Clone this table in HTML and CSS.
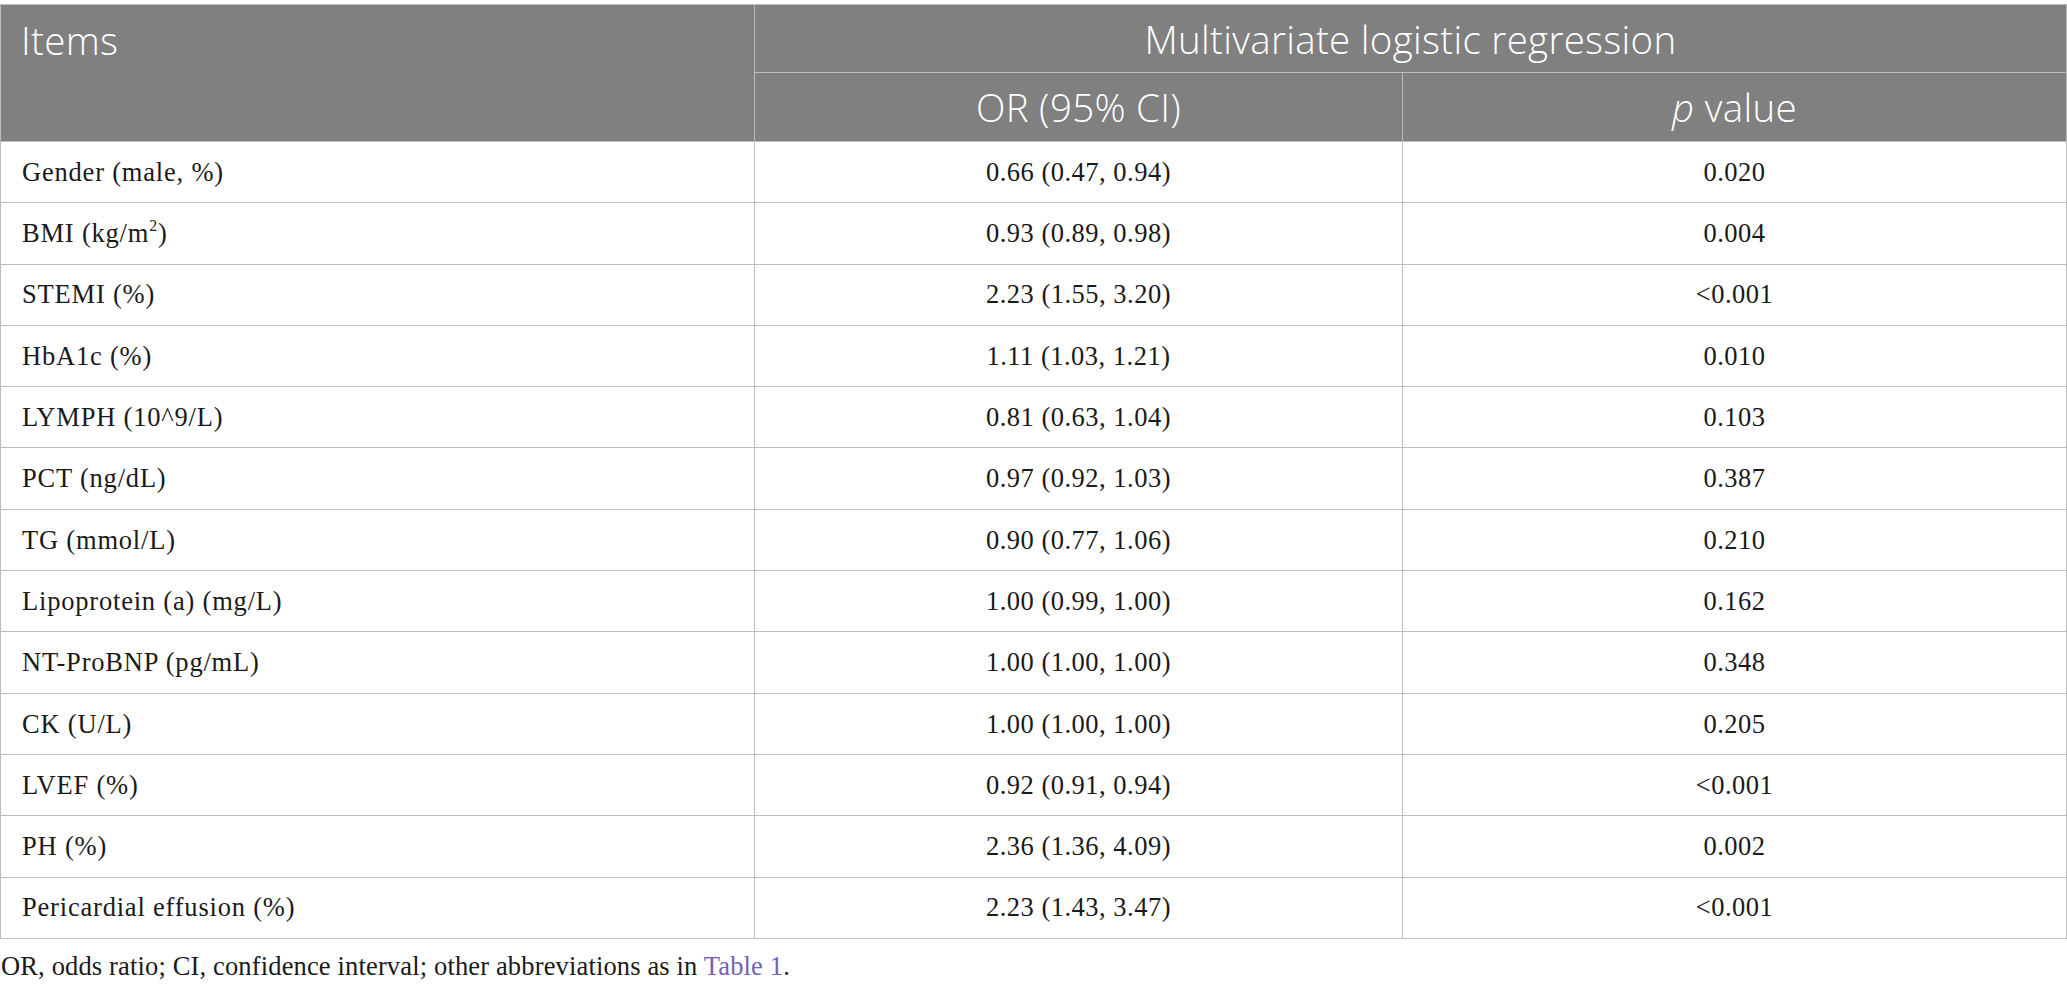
FILE: index.html
```html
<!DOCTYPE html>
<html lang="en">
<head>
<meta charset="utf-8">
<title>Multivariate logistic regression</title>
<link rel="stylesheet" href="styles.css">
</head>
<body>
<div class="page">
  <table class="data">
    <colgroup>
      <col class="c-items">
      <col class="c-or">
      <col class="c-p">
    </colgroup>
    <thead>
      <tr class="h1">
        <th class="items" rowspan="2">Items</th>
        <th class="center" colspan="2">Multivariate logistic regression</th>
      </tr>
      <tr class="h2">
        <th class="center">OR (95% CI)</th>
        <th class="center"><i>p</i> value</th>
      </tr>
    </thead>
    <tbody>
      <tr><td>Gender (male, %)</td><td class="num">0.66 (0.47, 0.94)</td><td class="num">0.020</td></tr>
      <tr><td>BMI (kg/m<sup>2</sup>)</td><td class="num">0.93 (0.89, 0.98)</td><td class="num">0.004</td></tr>
      <tr><td>STEMI (%)</td><td class="num">2.23 (1.55, 3.20)</td><td class="num">&lt;0.001</td></tr>
      <tr><td>HbA1c (%)</td><td class="num">1.11 (1.03, 1.21)</td><td class="num">0.010</td></tr>
      <tr><td>LYMPH (10^9/L)</td><td class="num">0.81 (0.63, 1.04)</td><td class="num">0.103</td></tr>
      <tr><td>PCT (ng/dL)</td><td class="num">0.97 (0.92, 1.03)</td><td class="num">0.387</td></tr>
      <tr><td>TG (mmol/L)</td><td class="num">0.90 (0.77, 1.06)</td><td class="num">0.210</td></tr>
      <tr><td>Lipoprotein (a) (mg/L)</td><td class="num">1.00 (0.99, 1.00)</td><td class="num">0.162</td></tr>
      <tr><td>NT-ProBNP (pg/mL)</td><td class="num">1.00 (1.00, 1.00)</td><td class="num">0.348</td></tr>
      <tr><td>CK (U/L)</td><td class="num">1.00 (1.00, 1.00)</td><td class="num">0.205</td></tr>
      <tr><td>LVEF (%)</td><td class="num">0.92 (0.91, 0.94)</td><td class="num">&lt;0.001</td></tr>
      <tr><td>PH (%)</td><td class="num">2.36 (1.36, 4.09)</td><td class="num">0.002</td></tr>
      <tr><td>Pericardial effusion (%)</td><td class="num">2.23 (1.43, 3.47)</td><td class="num">&lt;0.001</td></tr>
    </tbody>
  </table>
  <p class="note">OR, odds ratio; CI, confidence interval; other abbreviations as in <a class="ref" href="#">Table 1</a>.</p>
</div>
</body>
</html>
```

FILE: styles.css
```css
html, body {
  margin: 0;
  padding: 0;
  background: #ffffff;
}

.page {
  padding-top: 4px;
  width: 2066px;
}

.data {
  width: 2066px;
  table-layout: fixed;
  border-collapse: collapse;
  font-family: "Liberation Serif", "Times New Roman", serif;
  font-size: 26.5px;
  letter-spacing: 0.8px;
  color: #1a1a1a;
}

.c-items { width: 754px; }
.c-or { width: 648px; }
.c-p { width: 664px; }

.data th,
.data td {
  border: 1px solid #bcbcbc;
}

.data th {
  background: #7f807f;
  color: #ffffff;
  font-family: "Open Sans", "Noto Sans", sans-serif;
  font-weight: 300;
  font-size: 38.5px;
  letter-spacing: 0.3px;
  padding: 0;
}

.data th.items {
  text-align: left;
  vertical-align: top;
  padding: 6px 0 0 20px;
  line-height: 58px;
}

.data th.center {
  text-align: center;
  vertical-align: middle;
}

.h1 { height: 68px; }
.h2 { height: 69px; }

.data td {
  height: 60.3px;
  padding: 0 0 0 21px;
  vertical-align: middle;
  line-height: 1;
}

.data td.num {
  text-align: center;
  padding: 0;
  letter-spacing: 0.5px;
}

.data sup {
  font-size: 60%;
  line-height: 0;
  vertical-align: 0.7em;
}

.note {
  margin: 11px 0 0 1px;
  font-family: "Liberation Serif", "Times New Roman", serif;
  font-size: 26.5px;
  letter-spacing: 0.15px;
  color: #1a1a1a;
  line-height: 32px;
}

.ref {
  color: #6f62b8;
  text-decoration: none;
}
```
